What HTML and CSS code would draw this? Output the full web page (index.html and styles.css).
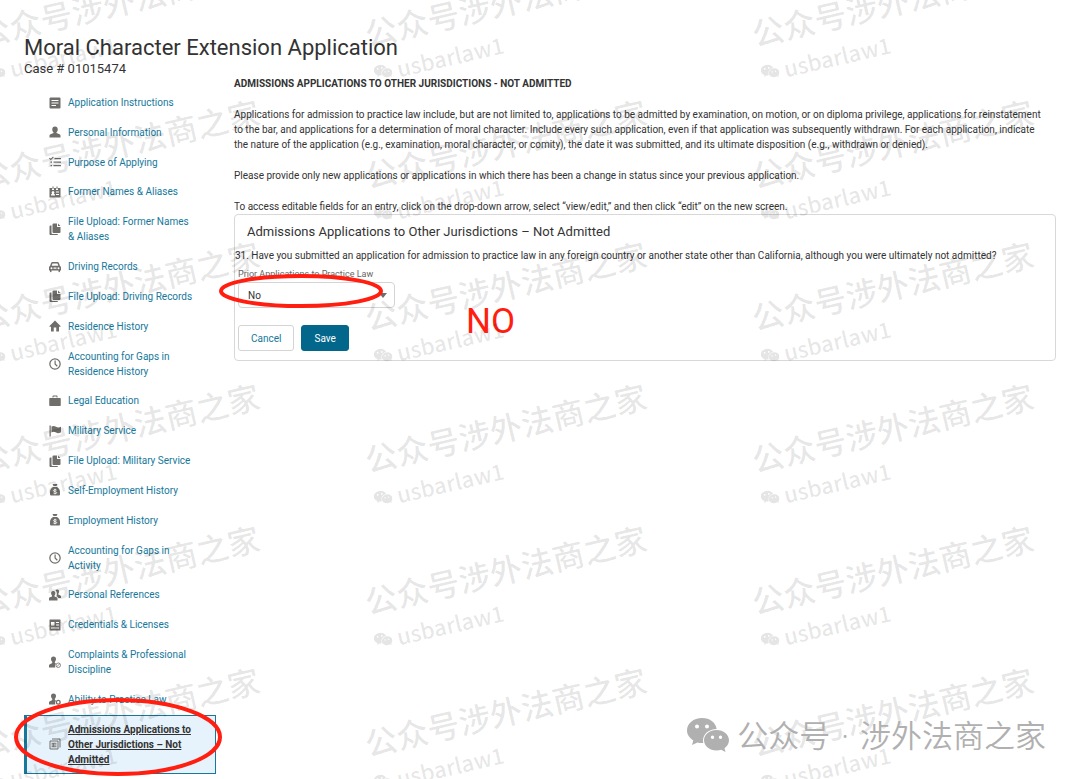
FILE: index.html
```html
<!DOCTYPE html>
<html lang="en">
<head>
<meta charset="utf-8">
<title>Moral Character Extension Application</title>
<link rel="stylesheet" href="styles.css">
</head>
<body>
<svg class="defs" aria-hidden="true">
  <symbol id="i-doc" viewBox="0 0 24 24"><path fill-rule="evenodd" d="M3 1h18a2 2 0 0 1 2 2v18a2 2 0 0 1-2 2H3a2 2 0 0 1-2-2V3a2 2 0 0 1 2-2zM5 6v2h14V6zM5 11v2h14v-2zM5 16v2h9v-2z"/></symbol>
  <symbol id="i-person" viewBox="0 0 24 24"><path d="M12 1c3.600 0 5.500 2.500 5.500 5.800 0 2.400-1 4.600-2.500 5.800v1.500l6 2.400c1.300.6 2 1.500 2 3V23H1v-3.500c0-1.500.7-2.400 2-3l6-2.400v-1.500C7.500 11.400 6.500 9.200 6.500 6.800 6.500 3.500 8.400 1 12 1z"/></symbol>
  <symbol id="i-list" viewBox="0 0 24 24"><path d="M0 5l1.500-1.500L3.500 5.500 8 1l1.500 1.500-6 6zM11 4h13v2.500H11zM9 11h15v2.500H9zM9 18h15v2.500H9zM3 11h3v2.500H3zM3 18h3v2.500H3z"/></symbol>
  <symbol id="i-badge" viewBox="0 0 24 24"><path fill-rule="evenodd" d="M1 4h5v4h4V4h4v4h4V4h5v19H1zM4 19h8v-2l-2.500-1.500a2.800 2.800 0 1 0-3 0L4 17zM14 11v2h6v-2zM14 16v2h6v-2zM7 1h2v5H7zM15 1h2v5h-2z"/></symbol>
  <symbol id="i-files" viewBox="0 0 24 24"><path d="M9 1h7v7h7v10a2 2 0 0 1-2 2H9a2 2 0 0 1-2-2V3a2 2 0 0 1 2-2zM18 1l5 5h-5zM1 7a2 2 0 0 1 2-2h2v15a2 2 0 0 0 2 2h11a2 2 0 0 1-2 2H3a2 2 0 0 1-2-2z"/></symbol>
  <symbol id="i-car" viewBox="0 0 24 24"><path fill-rule="evenodd" d="M7 2h10c1.500 0 2.300.7 2.800 2L22 10c1.300.6 2 1.700 2 3v6h-2v2a1.500 1.500 0 0 1-3 0v-2H5v2a1.500 1.500 0 0 1-3 0v-2H0v-6c0-1.300.7-2.400 2-3l2.200-6C4.700 2.700 5.500 2 7 2zM7 5L5.300 9.500h13.400L17 5zM5 12.500a2 2 0 1 0 0 4 2 2 0 0 0 0-4zM19 12.500a2 2 0 1 0 0 4 2 2 0 0 0 0-4zM9 13v2.500h6V13z"/></symbol>
  <symbol id="i-home" viewBox="0 0 24 24"><path d="M12 1l11.500 11.500-1 1H20V22a1 1 0 0 1-1 1h-4.500v-8h-5v8H5a1 1 0 0 1-1-1v-8.500H1.500l-1-1z"/></symbol>
  <symbol id="i-clock" viewBox="0 0 24 24"><circle cx="12" cy="12" r="10.300" fill="none" stroke="currentColor" stroke-width="2.500"/><path d="M11 5h2.400v6.600l4 4-1.700 1.700-4.700-4.700z"/></symbol>
  <symbol id="i-case" viewBox="0 0 24 24"><path d="M7 5V3c0-1.200.8-2 2-2h6c1.200 0 2 .8 2 2v2h-2V3H9v2zM2 6h20a1.500 1.500 0 0 1 1.500 1.500v13A1.500 1.500 0 0 1 22 22H2A1.500 1.500 0 0 1 .5 20.500v-13A1.500 1.500 0 0 1 2 6z"/></symbol>
  <symbol id="i-flag" viewBox="0 0 24 24"><path d="M1 1h2.500v22H1zM5 3c3-1.500 6-1.500 9 .5s6 2 10 0v11c-4 2.500-7 2.500-10 .5s-6-2-9-.5z"/></symbol>
  <symbol id="i-money" viewBox="0 0 24 24"><path d="M7 0h10l-2 4H9zM8 6h8c4 2 6 6 6 10v4c0 2-1 3-3 3H5c-2 0-3-1-3-3v-4c0-4 2-8 6-10z"/><path d="M15.500 12.500c-1-1.300-6.500-1.800-6.500.7 0 2.800 6.500 1.200 6.500 4 0 2.600-5.500 2.300-7 .6M12 9.500v11" fill="none" stroke="#fff" stroke-width="1.700"/></symbol>
  <symbol id="i-people" viewBox="0 0 24 24"><path d="M8.500 4c3 0 4.300 2 4.300 4.500 0 2-.8 3.600-1.800 4.500v2l4 1.500c1.500.6 2 1.500 2 3V23H0v-3.500c0-1.500.5-2.400 2-3L6 15v-2c-1-.9-1.800-2.500-1.800-4.500C4.200 6 5.500 4 8.500 4zM13 3c.7-1.300 1.800-2 3.300-2 2.600 0 4 1.800 4 4.200 0 1.800-.8 3.300-1.700 4.100V11l3.400 1.500c1.500.7 2 1.500 2 3V18h-5.500c-.5-1.700-2-2.800-4-3.500 1-1.500 1.400-3.500 1-6.500-.2-2-1-4-2.500-5z"/></symbol>
  <symbol id="i-news" viewBox="0 0 24 24"><path fill-rule="evenodd" d="M2 1h20a1 1 0 0 1 1 1v20a1 1 0 0 1-1 1H2a1 1 0 0 1-1-1V2a1 1 0 0 1 1-1zM4 6v7h7V6zM14 6v2h6V6zM14 11v2h6v-2zM4 17v2h16v-2z"/></symbol>
  <symbol id="i-ban" viewBox="0 0 24 24"><path d="M9 1c3.500 0 5 2.300 5 5.200 0 2.200-1 4.200-2.300 5.300V14l2.300 1a8 8 0 0 0-1.500 8H0v-3.500c0-1.600.6-2.400 2-3L6.500 14v-2.500C5 10.400 4 8.400 4 6.200 4 3.300 5.500 1 9 1z"/><circle cx="18.500" cy="18.500" r="4.500" fill="none" stroke="currentColor" stroke-width="1.600"/><path d="M15.500 21.500l6-6" stroke="currentColor" stroke-width="1.500"/></symbol>
  <symbol id="i-gear" viewBox="0 0 24 24"><path d="M9 1c3.500 0 5 2.300 5 5.200 0 2.200-1 4.200-2.300 5.300V14l2.300 1a8 8 0 0 0-1.500 8H0v-3.500c0-1.600.6-2.400 2-3L6.500 14v-2.500C5 10.400 4 8.400 4 6.200 4 3.300 5.500 1 9 1z"/><circle cx="18.500" cy="18.500" r="3.700" fill="none" stroke="currentColor" stroke-width="2.600"/></symbol>
  <symbol id="i-copy" viewBox="0 0 24 24"><path d="M6 2h16v17M2 6h16v16H2zM5 10.500h10M5 14h10M5 17.500h10M8.500 10v8" fill="none" stroke="currentColor" stroke-width="2"/></symbol>
  <symbol id="i-chat" viewBox="0 0 42 34"><path fill-rule="evenodd" d="M15 0c8 0 14 4.800 14.600 11C22 11 16 16 16 22.500c0 1 .1 1.700.3 2.400-2 .2-4 0-5.800-.5L5 27l1.300-4.700C2.500 20 0 16.500 0 12.500 0 5.500 6.500 0 15 0zM10 6.500a2 2 0 1 0 0 4 2 2 0 0 0 0-4zM20 6.500a2 2 0 1 0 0 4 2 2 0 0 0 0-4z"/><path fill-rule="evenodd" d="M29.500 12C36.400 12 42 16.600 42 22.300c0 3.200-1.800 6-4.500 8L38.500 34l-4.300-2.200c-1.500.5-3 .7-4.700.7-6.900 0-12.500-4.600-12.500-10.200S22.600 12 29.500 12zM25.500 17.500a1.700 1.700 0 1 0 0 3.400 1.700 1.700 0 0 0 0-3.400zM33.500 17.500a1.700 1.700 0 1 0 0 3.400 1.700 1.700 0 0 0 0-3.400z"/></symbol>
</svg>

<div class="page">
  <header class="page-head">
    <h1>Moral Character Extension Application</h1>
    <p class="case">Case # 01015474</p>
  </header>

  <div class="columns">
    <nav class="steps" aria-label="Application sections">
      <a href="#"><svg><use href="#i-doc"/></svg><span>Application Instructions</span></a>
      <a href="#"><svg><use href="#i-person"/></svg><span>Personal Information</span></a>
      <a href="#"><svg><use href="#i-list"/></svg><span>Purpose of Applying</span></a>
      <a href="#"><svg><use href="#i-badge"/></svg><span>Former Names &amp; Aliases</span></a>
      <a href="#"><svg><use href="#i-files"/></svg><span>File Upload: Former Names &amp;&nbsp;Aliases</span></a>
      <a href="#"><svg><use href="#i-car"/></svg><span>Driving Records</span></a>
      <a href="#"><svg><use href="#i-files"/></svg><span>File Upload: Driving Records</span></a>
      <a href="#"><svg><use href="#i-home"/></svg><span>Residence History</span></a>
      <a href="#"><svg><use href="#i-clock"/></svg><span>Accounting for Gaps in Residence History</span></a>
      <a href="#"><svg><use href="#i-case"/></svg><span>Legal Education</span></a>
      <a href="#"><svg><use href="#i-flag"/></svg><span>Military Service</span></a>
      <a href="#"><svg><use href="#i-files"/></svg><span>File Upload: Military Service</span></a>
      <a href="#"><svg><use href="#i-money"/></svg><span>Self-Employment History</span></a>
      <a href="#"><svg><use href="#i-money"/></svg><span>Employment History</span></a>
      <a href="#"><svg><use href="#i-clock"/></svg><span>Accounting for Gaps in<br>Activity</span></a>
      <a href="#"><svg><use href="#i-people"/></svg><span>Personal References</span></a>
      <a href="#"><svg><use href="#i-news"/></svg><span>Credentials &amp; Licenses</span></a>
      <a href="#"><svg><use href="#i-ban"/></svg><span>Complaints &amp; Professional Discipline</span></a>
      <a href="#"><svg><use href="#i-gear"/></svg><span>Ability to Practice Law</span></a>
      <a href="#" class="current" aria-current="page"><svg><use href="#i-copy"/></svg><span>Admissions Applications to Other Jurisdictions – Not Admitted</span></a>
    </nav>

    <main class="content">
      <h2>ADMISSIONS APPLICATIONS TO OTHER JURISDICTIONS - NOT ADMITTED</h2>
      <p>Applications for admission to practice law include, but are not limited to, applications to be admitted by examination, on motion, or on diploma privilege, applications for reinstatement to the bar, and applications for a determination of moral character. Include every such application, even if that application was subsequently withdrawn. For each application, indicate the nature of the application (e.g., examination, moral character, or comity), the date it was submitted, and its ultimate disposition (e.g., withdrawn or denied).</p>
      <p>Please provide only new applications or applications in which there has been a change in status since your previous application.</p>
      <p>To access editable fields for an entry, click on the drop-down arrow, select “view/edit,” and then click “edit” on the new screen.</p>
      <form class="card">
        <h3>Admissions Applications to Other Jurisdictions – Not Admitted</h3>
        <p class="question">31. Have you submitted an application for admission to practice law in any foreign country or another state other than California, although you were ultimately not admitted?</p>
        <div class="field">
          <label for="prior">Prior Applications to Practice Law</label>
          <div class="select">
            <select id="prior"><option>No</option><option>Yes</option></select>
            <svg class="ring ring-select" viewBox="0 0 164 34" preserveAspectRatio="none" aria-hidden="true"><ellipse cx="82" cy="17" rx="80" ry="15"/></svg>
          </div>
        </div>
        <div class="actions">
          <button type="button" class="cancel">Cancel</button>
          <button type="button" class="save">Save</button>
        </div>
        <span class="note">NO</span>
      </form>
    </main>
  </div>
  <svg class="ring ring-nav" viewBox="0 0 208 79" preserveAspectRatio="none" aria-hidden="true"><ellipse cx="104" cy="39" rx="102" ry="37"/></svg>

  <div class="marks" aria-hidden="true">
    <div class="mark"><b>公众号涉外法商之家</b><i><svg><use href="#i-chat"/></svg>usbarlaw1</i></div>
    <div class="mark"><b>公众号涉外法商之家</b><i><svg><use href="#i-chat"/></svg>usbarlaw1</i></div>
    <div class="mark"><b>公众号涉外法商之家</b><i><svg><use href="#i-chat"/></svg>usbarlaw1</i></div>
    <div class="mark"><b>公众号涉外法商之家</b><i><svg><use href="#i-chat"/></svg>usbarlaw1</i></div>
    <div class="mark"><b>公众号涉外法商之家</b><i><svg><use href="#i-chat"/></svg>usbarlaw1</i></div>
    <div class="mark"><b>公众号涉外法商之家</b><i><svg><use href="#i-chat"/></svg>usbarlaw1</i></div>
    <div class="mark"><b>公众号涉外法商之家</b><i><svg><use href="#i-chat"/></svg>usbarlaw1</i></div>
    <div class="mark"><b>公众号涉外法商之家</b><i><svg><use href="#i-chat"/></svg>usbarlaw1</i></div>
    <div class="mark"><b>公众号涉外法商之家</b><i><svg><use href="#i-chat"/></svg>usbarlaw1</i></div>
    <div class="mark"><b>公众号涉外法商之家</b><i><svg><use href="#i-chat"/></svg>usbarlaw1</i></div>
    <div class="mark"><b>公众号涉外法商之家</b><i><svg><use href="#i-chat"/></svg>usbarlaw1</i></div>
    <div class="mark"><b>公众号涉外法商之家</b><i><svg><use href="#i-chat"/></svg>usbarlaw1</i></div>
    <div class="mark"><b>公众号涉外法商之家</b><i><svg><use href="#i-chat"/></svg>usbarlaw1</i></div>
    <div class="mark"><b>公众号涉外法商之家</b><i><svg><use href="#i-chat"/></svg>usbarlaw1</i></div>
    <div class="mark"><b>公众号涉外法商之家</b><i><svg><use href="#i-chat"/></svg>usbarlaw1</i></div>
    <div class="mark"><b>公众号涉外法商之家</b><i><svg><use href="#i-chat"/></svg>usbarlaw1</i></div>
    <div class="mark"><b>公众号涉外法商之家</b><i><svg><use href="#i-chat"/></svg>usbarlaw1</i></div>
    <div class="mark"><b>公众号涉外法商之家</b><i><svg><use href="#i-chat"/></svg>usbarlaw1</i></div>
  </div>
  <div class="signature"><svg aria-hidden="true"><use href="#i-chat"/></svg><span>公众号<span class="dot"> · </span>涉外法商之家</span></div>
</div>
</body>
</html>
```
FILE: styles.css
```css
* { box-sizing: border-box; }
body {
  margin: 0;
  background: #fff;
  color: #333;
  font: 10px/15px Roboto, "Noto Sans CJK SC", sans-serif;
}
h1, h2, h3, p { margin: 0; }
.defs { position: absolute; width: 0; height: 0; }

.page {
  position: relative;
  display: flex;
  flex-direction: column;
  min-height: 100vh;
  padding: 35px 24px 5px;
  overflow: hidden;
}
h1 { font-size: 22px; line-height: 26px; font-weight: 400; }
.case { font-size: 13px; line-height: 15px; }

.columns { flex: 1; display: flex; gap: 18px; }

.steps {
  flex: 0 0 192px;
  display: flex;
  flex-direction: column;
  justify-content: space-between;
  padding-top: 12px;
}
.steps a {
  display: flex;
  align-items: center;
  gap: 7px;
  padding: 7px 20px 7px 25px;
  color: #16789b;
  text-decoration: none;
}
.steps svg { flex: none; width: 12px; height: 12px; color: #706e6b; fill: currentColor; }
.steps .current {
  padding: 6px 19px 6px 22px;
  border: 1px solid #16789b;
  border-left-width: 3px;
  background: #e6f2fc;
  color: #333;
  font-weight: 700;
  text-decoration: underline;
}

.content { flex: 1; min-width: 0; }
.content h2 { font-size: 10px; line-height: 15px; font-weight: 700; margin-bottom: 16px; }
.content > p { margin-bottom: 16px; padding-right: 10px; }
.content > p + .card { margin-top: -16px; }

.card {
  position: relative;
  border: 1px solid #d8d8d8;
  border-radius: 4px;
  padding: 7px 0 9px;
}
.card h3 { padding: 0 12px; font-size: 13px; line-height: 20px; font-weight: 400; }
.question { margin-top: 6px; }
.field { padding: 4px 3px 0; }
.field label { display: block; font-size: 9px; line-height: 14px; color: #666; }
.select { position: relative; width: 157px; margin-top: 1px; }
.select select {
  display: block;
  width: 100%;
  height: 26px;
  padding: 0 9px;
  border: 1px solid #d4d4d4;
  border-radius: 4px;
  background: #fff;
  color: #333;
  font: inherit;
  appearance: none;
}
.select::after {
  content: "";
  position: absolute;
  right: 8px;
  top: 11px;
  border: 4px solid transparent;
  border-top: 5px solid #706e6b;
  border-bottom: 0;
}
.actions { display: flex; gap: 7px; padding: 17px 3px 0; }
.actions button {
  height: 26px;
  padding: 0 12px;
  border: 1px solid #d4d4d4;
  border-radius: 3px;
  background: #fff;
  color: #16789b;
  font: inherit;
}
.actions .save { background: #03678c; border-color: #03678c; color: #fff; }

.note {
  position: absolute;
  left: 231px;
  top: 87px;
  color: #ff1e0f;
  font-size: 35px;
  line-height: 40px;
}
.ring { position: absolute; z-index: 2; overflow: visible; pointer-events: none; }
.ring ellipse { fill: none; stroke: #ff1e0f; stroke-width: 4; }
.ring-select { left: -19px; top: -8px; width: 164px; height: 34px; }
.ring-nav { left: 14px; bottom: 2px; width: 208px; height: 79px; }

.marks {
  position: absolute;
  left: -22px;
  top: -45px;
  display: grid;
  grid-template-columns: repeat(3, 387px);
  grid-auto-rows: 142px;
  color: rgba(0, 0, 0, 0.1);
  font-family: "Noto Sans CJK SC", sans-serif;
  pointer-events: none;
}
.mark { padding-top: 60px; transform: rotate(-13deg); transform-origin: 0 78px; }
.mark b { display: block; font-size: 32px; line-height: 36px; font-weight: 500; }
.mark i {
  display: flex;
  align-items: center;
  gap: 5px;
  margin-top: 9px;
  font-size: 22px;
  line-height: 28px;
  font-style: normal;
  font-weight: 500;
}
.mark svg { width: 18px; height: 15px; fill: currentColor; }

.signature {
  position: absolute;
  right: 34px;
  bottom: 24px;
  display: flex;
  align-items: center;
  gap: 8px;
  color: #b0b0b0;
  font: 350 31px/40px "Noto Sans", "Noto Sans CJK SC", sans-serif;
}
.signature svg { width: 42px; height: 34px; fill: currentColor; }
.signature .dot { padding: 0 3px; }
```
